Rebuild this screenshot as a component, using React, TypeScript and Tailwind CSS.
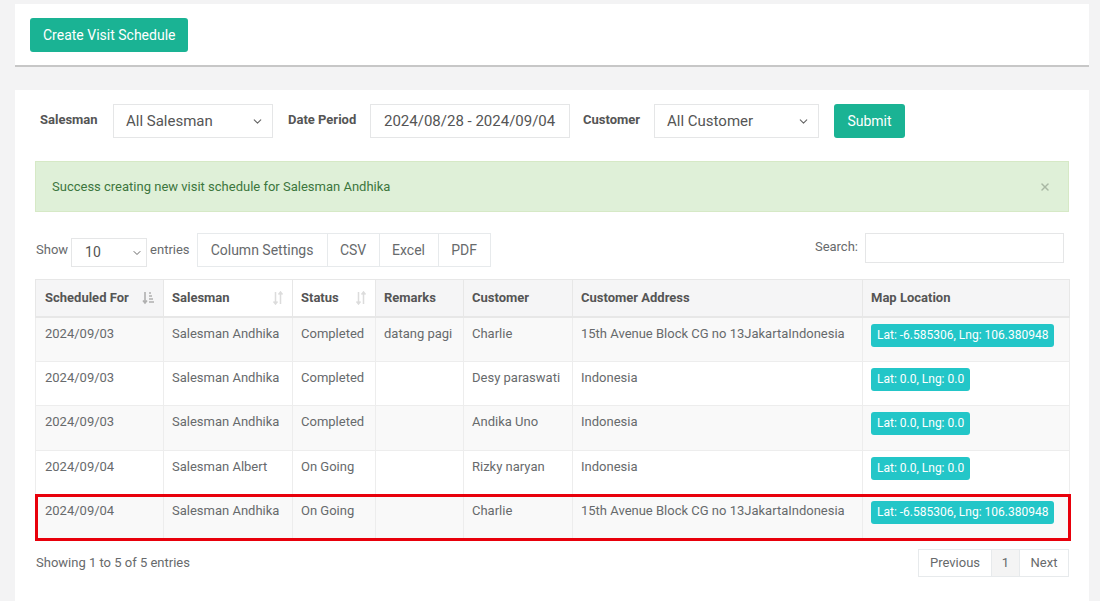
import { ChevronDown, X } from 'lucide-react'

const rows = [
  { date: '2024/09/03', salesman: 'Salesman Andhika', status: 'Completed', remarks: 'datang pagi', customer: 'Charlie', address: '15th Avenue Block CG no 13JakartaIndonesia', loc: 'Lat: -6.585306, Lng: 106.380948' },
  { date: '2024/09/03', salesman: 'Salesman Andhika', status: 'Completed', remarks: '', customer: 'Desy paraswati', address: 'Indonesia', loc: 'Lat: 0.0, Lng: 0.0' },
  { date: '2024/09/03', salesman: 'Salesman Andhika', status: 'Completed', remarks: '', customer: 'Andika Uno', address: 'Indonesia', loc: 'Lat: 0.0, Lng: 0.0' },
  { date: '2024/09/04', salesman: 'Salesman Albert', status: 'On Going', remarks: '', customer: 'Rizky naryan', address: 'Indonesia', loc: 'Lat: 0.0, Lng: 0.0' },
  { date: '2024/09/04', salesman: 'Salesman Andhika', status: 'On Going', remarks: '', customer: 'Charlie', address: '15th Avenue Block CG no 13JakartaIndonesia', loc: 'Lat: -6.585306, Lng: 106.380948' },
]

const rowHeights = ['h-[45px]', 'h-[44px]', 'h-[45px]', 'h-[44px]', 'h-[45px]']

function SortActive() {
  return (
    <svg width="12" height="14" viewBox="0 0 12 14" className="text-[#b0b0b0]">
      <path d="M3 1v11M1 9.5l2 2.5 2-2.5" stroke="currentColor" strokeWidth="1.6" fill="none" />
      <path d="M7 2h2M7 5h3M7 8h4M7 11h5" stroke="currentColor" strokeWidth="1.4" />
    </svg>
  )
}

function SortIdle() {
  return (
    <svg width="12" height="14" viewBox="0 0 12 14" className="text-[#dcdcdc]">
      <path d="M3.5 1v12M1.5 10.5l2 2.5 2-2.5" stroke="currentColor" strokeWidth="1.5" fill="none" />
      <path d="M8.5 13V1M6.5 3.5l2-2.5 2 2.5" stroke="currentColor" strokeWidth="1.5" fill="none" />
    </svg>
  )
}

function Select({ label, width }: { label: string; width: string }) {
  return (
    <div className={`flex h-[34px] ${width} items-center justify-between border border-[#e5e6e7] bg-white pl-3 pr-2 text-[15px] text-[#555]`}>
      <span>{label}</span>
      <ChevronDown size={13} strokeWidth={2} className="text-[#666]" />
    </div>
  )
}

const cols = ['w-[128px]', 'w-[129px]', 'w-[83px]', 'w-[88px]', 'w-[109px]', 'w-[290px]', 'w-[207px]']

export default function App() {
  return (
    <div className="min-h-[601px] bg-[#f3f3f4] pl-[15px] pr-[11px] pt-1 font-['Roboto',sans-serif] text-[13px] text-[#676a6c]">
      <div className="flex h-[63px] items-start border-b-2 border-[#c7c7c7] bg-white px-[15px] pt-[14px]">
        <button className="h-[34px] rounded-[3px] bg-[#1ab394] px-[13px] text-[14px] text-white">Create Visit Schedule</button>
      </div>

      <div className="mt-[23px] bg-white px-5 pt-[14px] pb-10">
        <div className="flex items-center">
          <span className="ml-[5px] w-[73px] pb-[3px] text-[13px] font-bold text-[#555]">Salesman</span>
          <Select label="All Salesman" width="w-[160px]" />
          <span className="ml-[15px] w-[82px] pb-[3px] text-[13px] font-bold text-[#555]">Date Period</span>
          <div className="flex h-[34px] w-[200px] items-center border border-[#e5e6e7] pl-[13px] text-[15px] text-[#555]">2024/08/28 - 2024/09/04</div>
          <span className="ml-[13px] w-[71px] pb-[3px] text-[13px] font-bold text-[#555]">Customer</span>
          <Select label="All Customer" width="w-[165px]" />
          <button className="ml-[15px] h-[34px] w-[71px] rounded-[3px] bg-[#1ab394] text-[14px] text-white">Submit</button>
        </div>

        <div className="mt-[23px] flex h-[51px] items-center justify-between border border-[#d6e9c6] bg-[#dff0d8] pl-[16px] pr-[17px] text-[13px] text-[#3c763d]">
          <span>Success creating new visit schedule for Salesman Andhika</span>
          <X size={12} strokeWidth={3} className="text-[#a9b8a4]" />
        </div>

        <div className="mt-[21px] flex items-start justify-between">
          <div className="flex items-center">
            <span className="ml-px text-[13px]">Show</span>
            <div className="ml-[3px] mt-[5px] flex h-[29px] w-[76px] items-center justify-between border border-[#e5e6e7] pl-[13px] pr-[3px] text-[14px] text-[#555]">
              <span>10</span>
              <ChevronDown size={12} strokeWidth={2} className="text-[#666]" />
            </div>
            <span className="ml-[3px] text-[13px]">entries</span>
            <div className="ml-[7px] flex h-[34px] border border-[#e7eaec] text-[14px] text-[#676a6c]">
              <div className="flex w-[130px] items-center justify-center border-r border-[#e7eaec]">Column Settings</div>
              <div className="flex w-[52px] items-center justify-center border-r border-[#e7eaec]">CSV</div>
              <div className="flex w-[59px] items-center justify-center border-r border-[#e7eaec]">Excel</div>
              <div className="flex w-[51px] items-center justify-center">PDF</div>
            </div>
          </div>
          <div className="mr-[5px] flex items-center">
            <span className="mb-[2px] text-[13px]">Search:</span>
            <div className="ml-[7px] h-[30px] w-[199px] border border-[#e5e6e7]" />
          </div>
        </div>

        <table className="mt-[12px] w-[1034px] table-fixed border-collapse">
          <colgroup>
            {cols.map((c, i) => (
              <col key={i} className={c} />
            ))}
          </colgroup>
          <thead>
            <tr className="h-[37px] bg-[#f5f5f6] text-left text-[13px] font-bold text-[#555]">
              <th className="border border-b-2 border-[#e7e7e7] px-[9px]">
                <div className="flex items-center justify-between">Scheduled For <SortActive /></div>
              </th>
              <th className="border border-b-2 border-[#e7e7e7] bg-white px-[8px]">
                <div className="flex items-center justify-between">Salesman <SortIdle /></div>
              </th>
              <th className="border border-b-2 border-[#e7e7e7] bg-white px-[8px]">
                <div className="flex items-center justify-between">Status <SortIdle /></div>
              </th>
              <th className="border border-b-2 border-[#e7e7e7] px-[8px]">Remarks</th>
              <th className="border border-b-2 border-[#e7e7e7] px-[8px]">Customer</th>
              <th className="border border-b-2 border-[#e7e7e7] px-[8px]">Customer Address</th>
              <th className="border border-b-2 border-[#e7e7e7] px-[8px]">Map Location</th>
            </tr>
          </thead>
          <tbody>
            {rows.map((r, i) => {
              const last = i === rows.length - 1
              return (
                <tr
                  key={i}
                  className={`${rowHeights[i]} align-top ${i % 2 === 0 ? 'bg-[#f9f9f9]' : 'bg-white'} ${last ? 'outline-[3px] outline-[#e8000b] outline-solid -outline-offset-2' : ''}`}
                >
                  <td className="border border-[#ededed] px-[9px] pt-[6px]">{r.date}</td>
                  <td className="border border-[#ededed] px-[8px] pt-[6px]">{r.salesman}</td>
                  <td className="border border-[#ededed] px-[8px] pt-[6px]">{r.status}</td>
                  <td className="border border-[#ededed] px-[8px] pt-[6px]">{r.remarks}</td>
                  <td className="border border-[#ededed] px-[8px] pt-[6px]">{r.customer}</td>
                  <td className="border border-[#ededed] px-[8px] pt-[6px]">{r.address}</td>
                  <td className="border border-[#ededed] px-[8px] pt-[6px]">
                    <span className="inline-block rounded-[3px] bg-[#23c6c8] px-[6px] py-[4px] text-[12px] leading-[15px] text-white">{r.loc}</span>
                  </td>
                </tr>
              )
            })}
          </tbody>
        </table>

        <div className="mt-[9px] flex items-center justify-between">
          <span className="ml-px text-[13px]">Showing 1 to 5 of 5 entries</span>
          <div className="flex h-[28px] border border-[#e7eaec] text-[13px] text-[#676a6c]">
            <div className="flex w-[73px] items-center justify-center border-r border-[#e7eaec]">Previous</div>
            <div className="flex w-[28px] items-center justify-center border-r border-[#e7eaec] bg-[#f4f4f4]">1</div>
            <div className="flex w-[48px] items-center justify-center">Next</div>
          </div>
        </div>
      </div>
    </div>
  )
}
